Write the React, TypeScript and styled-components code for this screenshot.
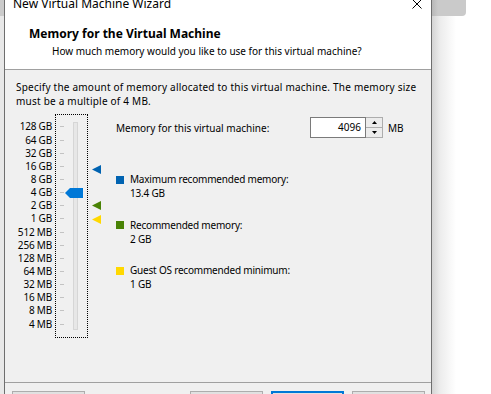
import React from "react";
import styled, { createGlobalStyle } from "styled-components";

const SCALE_LABELS = [
    "128 GB", "64 GB", "32 GB", "16 GB", "8 GB", "4 GB", "2 GB", "1 GB",
    "512 MB", "256 MB", "128 MB", "64 MB", "32 MB", "16 MB", "8 MB", "4 MB",
];
const ROW = 13.15;
const MAX_EXP = 17; // 128 GB = 2^17 MB
const CURRENT_MB = 4096;

const rowOf = (mb: number) => MAX_EXP - Math.log2(mb);

const MARKERS = [
    { mb: 13.4 * 1024, color: "#0063b1" },
    { mb: 2048, color: "#498205" },
    { mb: 1024, color: "#ffd800" },
];

const LEGEND = [
    { color: "#0063b1", label: "Maximum recommended memory:", value: "13.4 GB" },
    { color: "#498205", label: "Recommended memory:", value: "2 GB" },
    { color: "#ffd800", label: "Guest OS recommended minimum:", value: "1 GB" },
];

const GlobalStyle = createGlobalStyle`
    html, body {
        margin: 0;
        padding: 0;
    }
    body {
        width: 491px;
        height: 394px;
        overflow: hidden;
        background: #ffffff;
        font-family: "Noto Sans", "Open Sans", sans-serif;
        font-size: 10px;
        color: #000000;
    }
`;

export default function App() {
    const thumbTop = 12 + rowOf(CURRENT_MB) * ROW - 5;

    return <>
        <GlobalStyle />
        <Desktop>
            <LeftGutter />
            <Window>
                <TitleBar>
                    <TitleText>New Virtual Machine Wizard</TitleText>
                    <CloseIcon width="10" height="10" viewBox="0 0 10 10">
                        <path d="M0.5 0.5 L9.5 9.5 M9.5 0.5 L0.5 9.5" stroke="#000" strokeWidth="1" />
                    </CloseIcon>
                </TitleBar>
                <Header>
                    <HeaderTitle>Memory for the Virtual Machine</HeaderTitle>
                    <HeaderSubtitle>How much memory would you like to use for this virtual machine?</HeaderSubtitle>
                </Header>
                <Body>
                    <Intro>
                        Specify the amount of memory allocated to this virtual machine. The memory size
                        <br />
                        must be a multiple of 4 MB.
                    </Intro>
                    <MemoryRow>
                        <ScaleLabels>
                            {SCALE_LABELS.map(l => <ScaleLabel key={l}>{l}</ScaleLabel>)}
                        </ScaleLabels>
                        <FocusBox>
                            <Ticks>
                                {SCALE_LABELS.map(l => <Tick key={l}><TickDash /></Tick>)}
                            </Ticks>
                            <Track />
                            <Thumb width="18" height="10" viewBox="0 0 18 10" style={{ top: thumbTop }}>
                                <polygon points="0,5 5,0 18,0 18,10 5,10" fill="#0078d7" />
                            </Thumb>
                        </FocusBox>
                        <MarkerRail>
                            {MARKERS.map(m => (
                                <Marker key={m.mb} width="9" height="9" viewBox="0 0 9 9"
                                    style={{ top: 13 + rowOf(m.mb) * ROW - 4.5 }}>
                                    <polygon points="0,4.5 9,0 9,9" fill={m.color} />
                                </Marker>
                            ))}
                        </MarkerRail>
                        <InfoColumn>
                            <AmountRow>
                                <AmountLabel>Memory for this virtual machine:</AmountLabel>
                                <AmountInput>4096</AmountInput>
                                <Spinner>
                                    <SpinButton>
                                        <svg width="5" height="3" viewBox="0 0 5 3"><polygon points="0,3 2.5,0 5,3" fill="#000" /></svg>
                                    </SpinButton>
                                    <SpinButton>
                                        <svg width="5" height="3" viewBox="0 0 5 3"><polygon points="0,0 5,0 2.5,3" fill="#000" /></svg>
                                    </SpinButton>
                                </Spinner>
                                <UnitText>MB</UnitText>
                            </AmountRow>
                            <LegendList>
                                {LEGEND.map(item => (
                                    <LegendItem key={item.label}>
                                        <Swatch color={item.color} />
                                        <LegendText>
                                            {item.label}
                                            <br />
                                            {item.value}
                                        </LegendText>
                                    </LegendItem>
                                ))}
                            </LegendList>
                        </InfoColumn>
                    </MemoryRow>
                </Body>
                <Footer>
                    <DialogButton>Help</DialogButton>
                    <ButtonGroup>
                        <DialogButton>&lt; Back</DialogButton>
                        <DialogButton primary>Next &gt;</DialogButton>
                        <DialogButton>Cancel</DialogButton>
                    </ButtonGroup>
                </Footer>
            </Window>
            <RightShadow>
                <BehindTab />
            </RightShadow>
        </Desktop>
    </>
}

const Desktop = styled.div`
    display: flex;
    width: 491px;
    height: 394px;
    overflow: hidden;
`

const LeftGutter = styled.div`
    width: 4px;
    flex-shrink: 0;
    background: linear-gradient(to bottom, #cbcbcb 0, #cbcbcb 16px, #e8e8e8 16px);
`

const Window = styled.div`
    width: 426px;
    flex-shrink: 0;
    margin-top: -12px;
    height: 430px;
    display: flex;
    flex-direction: column;
    background: #f0f0f0;
    border-left: 1px solid #6e6e6e;
    border-right: 1px solid #6e6e6e;
`

const TitleBar = styled.div`
    height: 31px;
    display: flex;
    align-items: center;
    justify-content: space-between;
    padding: 0 9px 0 8px;
    background: #ffffff;
`

const TitleText = styled.span`
    font-size: 12px;
    line-height: 16px;
`

const CloseIcon = styled.svg`
    display: block;
`

const Header = styled.div`
    height: 51px;
    box-sizing: border-box;
    padding-top: 7px;
    background: #ffffff;
    border-bottom: 1px solid #a0a0a0;
`

const HeaderTitle = styled.div`
    padding-left: 24px;
    font-size: 12px;
    font-weight: 700;
    line-height: 16px;
`

const HeaderSubtitle = styled.div`
    padding-left: 47px;
    margin-top: 1px;
    line-height: 16px;
`

const Body = styled.div`
    height: 312px;
    box-sizing: border-box;
    padding: 9.5px 11px 0;
`

const Intro = styled.p`
    margin: 0;
    line-height: 14px;
    letter-spacing: 0.22px;
    white-space: nowrap;
`

const MemoryRow = styled.div`
    display: flex;
    align-items: flex-start;
    margin-top: 6.5px;
`

const ScaleLabels = styled.div`
    width: 36px;
    padding-top: ${13 - ROW / 2}px;
    display: flex;
    flex-direction: column;
    align-items: flex-end;
`

const ScaleLabel = styled.div`
    height: ${ROW}px;
    line-height: ${ROW}px;
    letter-spacing: -0.2px;
    white-space: nowrap;
`

const FocusBox = styled.div`
    position: relative;
    margin-left: 3px;
    width: 31px;
    height: 222px;
    border: 1px dotted #000000;
    display: flex;
    align-items: flex-start;
`

const Ticks = styled.div`
    margin-left: 4px;
    padding-top: ${12 - ROW / 2}px;
    display: flex;
    flex-direction: column;
`

const Tick = styled.div`
    height: ${ROW}px;
    display: flex;
    align-items: center;
`

const TickDash = styled.div`
    width: 4px;
    height: 1px;
    background: #c3c3c3;
`

const Track = styled.div`
    margin-left: 9px;
    margin-top: 7px;
    width: 3px;
    height: 206px;
    background: #e7e7e7;
    border: 1px solid #d6d6d6;
`

const Thumb = styled.svg`
    position: absolute;
    left: 9px;
    display: block;
`

const MarkerRail = styled.div`
    position: relative;
    margin-left: 4px;
    width: 24px;
    height: 224px;
`

const Marker = styled.svg`
    position: absolute;
    left: 0;
    display: block;
`

const InfoColumn = styled.div`
    flex: 1;
    padding-top: 3px;
`

const AmountRow = styled.div`
    display: flex;
    align-items: center;
    height: 21px;
`

const AmountLabel = styled.div`
    width: 194px;
    white-space: nowrap;
`

const AmountInput = styled.div`
    width: 56px;
    height: 21px;
    box-sizing: border-box;
    border: 1px solid #7a7a7a;
    background: #ffffff;
    text-align: right;
    padding-right: 4px;
    line-height: 19px;
`

const Spinner = styled.div`
    width: 17px;
    height: 21px;
    display: flex;
    flex-direction: column;
`

const SpinButton = styled.div`
    flex: 1;
    display: flex;
    align-items: center;
    justify-content: center;
    background: #ececec;
    border: 1px solid #adadad;
    border-left: none;
    & + & {
        border-top: none;
    }
`

const UnitText = styled.span`
    margin-left: 5px;
`

const LegendList = styled.div`
    margin-top: 34px;
    display: flex;
    flex-direction: column;
    gap: 17.5px;
`

const LegendItem = styled.div`
    display: flex;
    align-items: flex-start;
`

const Swatch = styled.div<{ color: string }>`
    width: 8px;
    height: 8px;
    margin-top: 3.5px;
    margin-right: 6px;
    background: ${({ color }) => color};
`

const LegendText = styled.div`
    line-height: 14px;
    letter-spacing: -0.2px;
    white-space: nowrap;
`

const Footer = styled.div`
    display: flex;
    justify-content: space-between;
    padding: 8px 6px 0 7px;
    border-top: 1px solid #a0a0a0;
`

const ButtonGroup = styled.div`
    display: flex;
    gap: 8px;
`

const DialogButton = styled.div<{ primary?: boolean }>`
    width: 73px;
    height: 23px;
    box-sizing: border-box;
    display: flex;
    align-items: center;
    justify-content: center;
    background: #e1e1e1;
    border: ${({ primary }) => primary ? "2px solid #0078d7" : "1px solid #adadad"};
`

const RightShadow = styled.div`
    flex: 1;
    display: flex;
    flex-direction: column;
    background: linear-gradient(to right, #d4d4d4 0, #ececec 8px, #ffffff 24px);
`

const BehindTab = styled.div`
    width: 34px;
    height: 16px;
    background: linear-gradient(to right, #b8b8b8 0, #cacaca 6px);
    border-bottom-right-radius: 4px;
`
